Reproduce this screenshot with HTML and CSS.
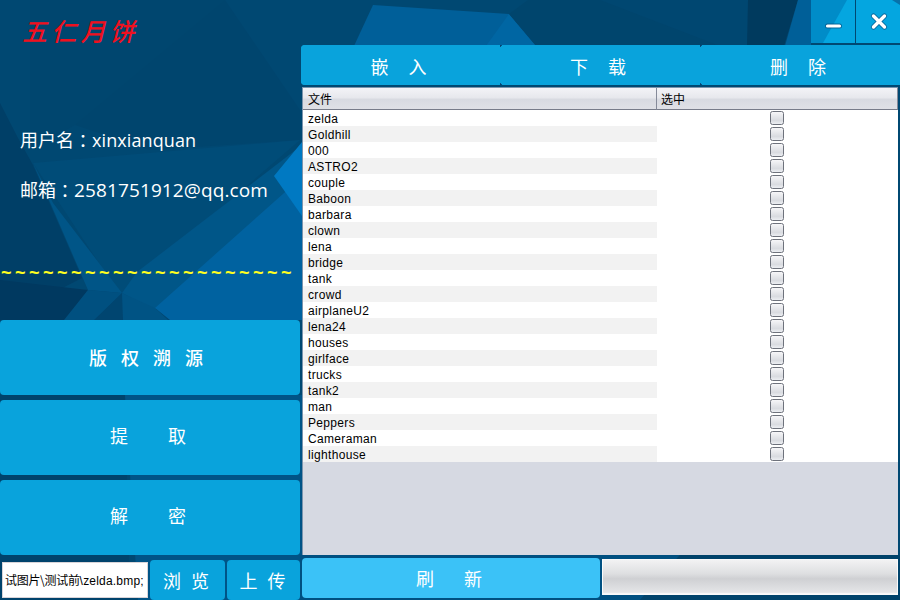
FILE: index.html
```html
<!DOCTYPE html>
<html lang="zh-CN">
<head>
<meta charset="utf-8">
<title>五仁月饼</title>
<link rel="stylesheet" href="styles.css">
</head>
<body>
<svg class="backdrop" viewBox="0 0 900 600" aria-hidden="true">
  <rect width="900" height="600" fill="#004872"/>
  <path d="M30 0H225L75 125L30 150Z" fill="#00466f"/>
  <path d="M225 0L300 110V140L150 150L75 125Z" fill="#00456e"/>
  <path d="M0 0H30V150H18L0 103Z" fill="#004872"/>
  <path d="M0 103L18 138L33 165L82 278L0 320Z" fill="#003f67"/>
  <path d="M33 163L300 140L120 295Z" fill="#004c78"/>
  <path d="M0 280L88 290L65 320H0Z" fill="#003960"/>
  <path d="M33 163L53 203L122 293L88 290Z" fill="#005587"/>
  <path d="M302 145L137 272L122 293L155 310L302 180Z" fill="#005688"/>
  <path d="M302 177L155 308L170 320H302Z" fill="#0062a0"/>
  <path d="M274 176L302 142V216Z" fill="#0079c2"/>
  <path d="M88 290L122 293L95 320H64Z" fill="#005080"/>
  <path d="M122 293L94 320H123Z" fill="#004570"/>
  <path d="M122 293L155 308L168 320H123Z" fill="#005384"/>
  <path d="M0 395H125L130 600H0Z" fill="#00436c"/>
  <path d="M125 395H302V600H138Z" fill="#005487"/>
  <path d="M373 5L509 14L536 46H354Z" fill="#005f99"/>
  <path d="M509 14L486 46H536Z" fill="#0066a3"/>
  <path d="M509 14L528 0H747V46H536Z" fill="#00456d"/>
  <path d="M600 0H748V46H720Z" fill="#004771"/>
  <path d="M748 0H798L784 46H747Z" fill="#003a5e"/>
  <path d="M798 0H811V46H785Z" fill="#005f98"/>
  <path d="M300 555H680L640 600H300Z" fill="#005081"/>
  <path d="M680 555H900V600H640Z" fill="#00436b"/>
</svg>
<div class="window">
  <aside class="side">
    <h1 class="brand">五仁月饼</h1>
    <p class="info user">用户名<span class="colon" lang="ja">：</span><span class="value">xinxianquan</span></p>
    <p class="info mail">邮箱<span class="colon" lang="ja">：</span><span class="value address">2581751912@qq.com</span></p>
    <div class="waves">~~~~~~~~~~~~~~~~~~~~~</div>
    <nav class="actions">
      <button class="btn trace">版权溯源</button>
      <button class="btn wide">提取</button>
      <button class="btn wide">解密</button>
    </nav>
    <div class="upload">
      <div class="path">试图片\测试前<span class="latin">\zelda.bmp;</span></div>
      <button class="btn browse">浏览</button>
      <button class="btn send">上传</button>
    </div>
  </aside>
  <main class="content">
    <div class="controls">
      <button class="ctl min" aria-label="最小化"><svg viewBox="0 0 44 43"><path d="M0 0H36L12 43H0Z" fill="#008cc8"/><path d="M16.5 26H28.5" stroke="#075080" stroke-opacity=".7" stroke-width="5" stroke-linecap="round"/><path d="M16.5 26H28.5" stroke="#fff" stroke-width="3.2" stroke-linecap="round"/></svg></button>
      <button class="ctl close" aria-label="关闭"><svg viewBox="0 0 44 43"><path d="M36 0H44V5Z" fill="#0872a9"/><path d="M17.5 16L28.5 27M28.5 16L17.5 27" stroke="#07669b" stroke-width="5.2" stroke-linecap="round"/><path d="M17.5 16L28.5 27M28.5 16L17.5 27" stroke="#fff" stroke-width="3.4" stroke-linecap="round"/></svg></button>
    </div>
    <div class="toolbar">
      <button class="btn">嵌入</button>
      <button class="btn">下载</button>
      <button class="btn">删除</button>
    </div>
    <div class="pane">
      <table class="files">
        <thead><tr><th class="name">文件</th><th>选中</th></tr></thead>
        <tbody id="rows"></tbody>
      </table>
    </div>
    <div class="footer">
      <button class="btn refresh">刷新</button>
      <div class="progress"></div>
    </div>
  </main>
</div>
<script src="app.js"></script>
</body>
</html>
```
FILE: styles.css
```css
* { box-sizing: border-box; }
body { margin: 0; width: 900px; height: 600px; overflow: hidden; font-family: "Liberation Sans", "Noto Sans CJK SC", sans-serif; }
.backdrop { position: absolute; inset: 0; width: 900px; height: 600px; z-index: -1; }
.window { display: grid; grid-template-columns: 301px 599px; height: 600px; }
.side, .content { display: flex; flex-direction: column; min-width: 0; }
.brand { margin: 12px 0 0 22px; height: 38px; line-height: 36px; font-size: 25px; font-weight: 500; font-style: italic; letter-spacing: 4.2px; color: #f0101e; font-family: "Noto Sans CJK SC", sans-serif; }
.info { margin: 0 0 0 20px; height: 28px; line-height: 28px; font-size: 18px; font-weight: 400; color: #fff; white-space: nowrap; font-family: "Noto Sans CJK SC", sans-serif; }
.colon { position: relative; top: 1px; font-family: "Noto Sans CJK JP", sans-serif; }
.value { font-family: "Open Sans", sans-serif; font-size: 18px; letter-spacing: .1px; }
.address { font-size: 19px; letter-spacing: .12px; }
.user { margin-top: 75px; }
.mail { margin-top: 22px; }
.waves { height: 16px; margin: 62px 0 0 1px; font: bold 18px/16px "Liberation Sans", sans-serif; letter-spacing: 3.49px; color: #ffff20; white-space: nowrap; }
.actions { display: flex; flex-direction: column; gap: 5px; margin-top: 39px; }
.btn { display: block; border: 0; padding: 0; border-radius: 4px; background: #09a3dc; color: #fff; font: 400 18px/24px "Noto Sans CJK SC", sans-serif; white-space: nowrap; }
.actions .btn { height: 75px; width: 300px; }
.actions .trace { font-weight: 500; letter-spacing: 14px; padding: 0 0 2px 6px; }
.actions .wide { letter-spacing: 40px; padding: 0 0 6px 36px; }
.upload { display: flex; margin-top: 5px; height: 40px; }
.path { width: 146px; height: 36px; margin: 2px 2px 0 2px; padding-left: 2px; border: 1px solid #d9d4d8; background: #fff; font: 12px/34px "Noto Sans CJK SC", sans-serif; color: #000; white-space: nowrap; overflow: hidden; letter-spacing: -.3px; }
.latin { font-family: "Liberation Sans", sans-serif; letter-spacing: .2px; }
.browse { width: 75px; letter-spacing: 10px; padding: 0 0 1px 7px; }
.send { width: 73px; margin-left: 2px; letter-spacing: 10px; padding: 0 0 1px 8px; }
.controls { display: flex; align-self: flex-end; gap: 1px; height: 45px; }
.ctl { border: 0; padding: 0; height: 43px; background: #04a6e0; }
.ctl svg { display: block; width: 100%; height: 43px; }
.min { width: 44px; }
.close { width: 44px; }
.toolbar { display: grid; grid-template-columns: 199px 200px 200px; height: 40px; background: #09a3dc; border-radius: 4px; }
.toolbar .btn { letter-spacing: 20px; padding: 2px 0 0 16px; }
.toolbar .btn + .btn { background: radial-gradient(circle at 0 0, #06426e 1.5px, transparent 2px), radial-gradient(circle at 0 100%, #06426e 1.5px, transparent 2px), #09a3dc; border-radius: 0; }
.pane { width: 596px; height: 468px; margin: 2px 0 0 1px; background: #d6d9e2; border: 1px solid #7b94ad; border-width: 1px 0 0 1px; }
.files { width: 595px; border-collapse: separate; border-spacing: 0; table-layout: fixed; font-size: 12px; color: #000; }
.files th { height: 22px; padding: 0 0 0 5px; text-align: left; font: 12px/20px "Noto Sans CJK SC", sans-serif; background: linear-gradient(#f3f3f7, #e7e8ed 45%, #d8dae1 55%, #dfe0e6); border-bottom: 1px solid #777b89; border-right: 1px solid #858a99; }
.files .name { width: 354px; }
.files th + th { padding-left: 4px; }
.files td { height: 16px; padding: 2px 0 0 5px; line-height: 14px; background: #fff; letter-spacing: .33px; }
.files tr:nth-child(even) td:first-child { background: #f2f2f2; }
.files td + td { padding: 0 2px 0 0; }
.box { display: block; width: 14px; height: 14px; margin: 1px auto; border: 1px solid #6e727c; border-radius: 2.5px; background: linear-gradient(#f6f6f8, #d9dbe0 70%, #eceef2); }
.footer { display: flex; margin: 3px 0 0 1px; height: 40px; }
.refresh { width: 298px; background: #3bc2f7; letter-spacing: 30px; padding: 0 0 1px 26px; }
.progress { width: 296px; height: 36px; margin: 1px 0 0 2px; border: 1px solid #fafafa; background: linear-gradient(#f2f2f3, #dedfe1 40%, #cfd0d3 55%, #e4e5e7 95%, #fff); }
```
FILE: app.js
```js
const files = ["zelda", "Goldhill", "000", "ASTRO2", "couple", "Baboon", "barbara", "clown", "lena", "bridge", "tank", "crowd", "airplaneU2", "lena24", "houses", "girlface", "trucks", "tank2", "man", "Peppers", "Cameraman", "lighthouse"];
document.getElementById("rows").innerHTML = files.map(name => `<tr><td>${name}</td><td><span class="box"></span></td></tr>`).join("");
```
